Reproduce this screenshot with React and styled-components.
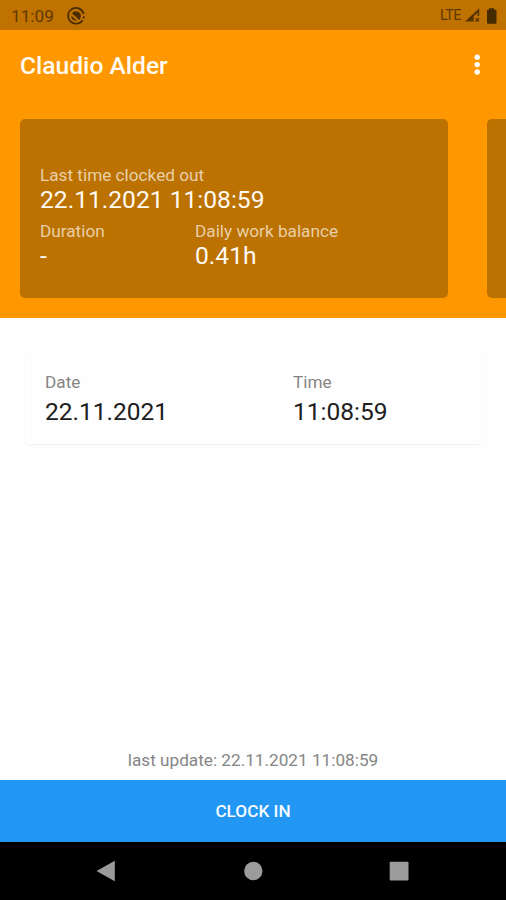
import React from "react";
import styled, { createGlobalStyle } from "styled-components";

const GlobalStyle = createGlobalStyle`
  * { box-sizing: border-box; }
  body { margin: 0; background: #fff; font-family: Roboto, "Liberation Sans", sans-serif; }
`;
const Screen = styled.div`
  width: 506px;
  height: 900px;
  display: flex;
  flex-direction: column;
  overflow: hidden;
  background: #fefefe;
`;
const StatusBar = styled.div`
  height: 30px;
  flex: none;
  display: flex;
  align-items: center;
  padding: 1px 6px 0 11px;
  background: #bf7200;
  color: #5f3900;
`;
const Clock = styled.span`
  width: 55px;
  font-size: 17.2px;
  line-height: 20px;
`;
const StatusIcons = styled.div`
  margin-left: auto;
  display: flex;
  align-items: center;
`;
const Network = styled.span`
  width: 25px;
  font-size: 14.4px;
  line-height: 20px;
  letter-spacing: -0.6px;
`;
const Header = styled.header`
  height: 288px;
  flex: none;
  background: #ff9800;
`;
const AppBar = styled.div`
  height: 89px;
  display: flex;
  justify-content: space-between;
  align-items: flex-start;
  padding: 20px 19px 0 20px;
`;
const Title = styled.h1`
  margin: 1px 0 0;
  font-size: 24.6px;
  line-height: 30px;
  font-weight: 500;
  color: #fffaf2;
`;
const MenuButton = styled.button`
  border: 0;
  padding: 0;
  margin-top: 3px;
  background: none;
  display: flex;
`;
const Carousel = styled.div`
  display: flex;
  gap: 39px;
  padding-left: 20px;
  overflow: hidden;
`;
const StatusCard = styled.section`
  flex: 0 0 428px;
  height: 179px;
  border-radius: 5px;
  padding: 45px 20px 0;
  background: #bc7200;
`;
const StatusColumns = styled.div`
  display: grid;
  grid-template-columns: 155px 1fr;
  margin-top: 6px;
`;
const StatusLabel = styled.div`
  font-size: 17.2px;
  line-height: 22px;
  color: #e8cfa8;
`;
const StatusValue = styled.div`
  font-size: 24.6px;
  line-height: 28px;
  color: #fffaf3;
`;
const Main = styled.main`
  flex: 1;
  display: flex;
  flex-direction: column;
  justify-content: space-between;
`;
const EntryCard = styled.section`
  height: 90px;
  margin: 36px 25px 0;
  padding: 17px 20px 0;
  display: grid;
  grid-template-columns: 248px 1fr;
  border-radius: 4px;
  background: #fefefe;
  box-shadow: 0 1px 2px rgba(0, 0, 0, 0.06);
`;
const FieldLabel = styled.div`
  font-size: 17.2px;
  line-height: 22px;
  color: #858585;
`;
const FieldValue = styled.div`
  margin-top: 5px;
  font-size: 24.5px;
  line-height: 28px;
  color: #202020;
`;
const LastUpdate = styled.p`
  margin: 0 0 9px;
  text-align: center;
  font-size: 17.2px;
  line-height: 22px;
  color: #858585;
`;
const ClockInButton = styled.button`
  height: 62px;
  flex: none;
  border: 0;
  padding: 0;
  background: #2196f3;
  color: #f5fbff;
  font: 500 17.2px/22px Roboto, sans-serif;
`;
const NavBar = styled.nav`
  height: 58px;
  flex: none;
  display: flex;
  justify-content: space-between;
  align-items: center;
  padding: 0 97px 0 96px;
  background: #000;
`;

const SyncIcon = () => (
  <svg width="20" height="20" viewBox="0 0 20 20" fill="none">
    <path d="M16.6 14.2A7.9 7.9 0 1 1 17.7 8M17.9 10.2A7.9 7.9 0 0 1 17.4 12.5M15.4 15.6A7.9 7.9 0 0 1 13.8 16.9" stroke="#4b2d00" strokeWidth="1.7" />
    <path d="M6 7.4A4.8 4.8 0 0 1 14.6 11.4L14 13.2 6 7.4Z M5.3 9.5 10.8 14.8A4.8 4.8 0 0 1 5.3 9.5Z" fill="#4b2d00" />
    <path d="m7.5 7.5 6.3 5.8" stroke="#4b2d00" strokeWidth="1.6" />
  </svg>
);
const SignalIcon = () => (
  <svg width="18" height="17" viewBox="0 0 18 17">
    <path d="M0 14.5 14.2 1.2V9h-1.7V5.7L8.7 9.3v5.2Z" fill="#573500" />
    <path d="m10.7 11.2 3.2 3.2m0-3.2-3.2 3.2" stroke="#573500" strokeWidth="1.4" />
  </svg>
);
const BatteryIcon = () => (
  <svg width="17" height="18" viewBox="0 0 17 18">
    <path d="M6 1.2h5v1.5h1.6q.9 0 .9 1v12.1q0 1-.9 1H4.9q-.9 0-.9-1V3.7q0-1 .9-1H6Z" fill="#452b00" />
  </svg>
);
const MoreIcon = () => (
  <svg width="20" height="24" viewBox="0 0 20 24" fill="#fff">
    <circle cx="10.2" cy="4.2" r="2.7" />
    <circle cx="10.2" cy="11.6" r="2.7" />
    <circle cx="10.2" cy="19" r="2.7" />
  </svg>
);

const Field = ({ label, children }) => (
  <div>
    <FieldLabel>{label}</FieldLabel>
    <FieldValue>{children}</FieldValue>
  </div>
);
const StatusItem = ({ label, children }) => (
  <div>
    <StatusLabel>{label}</StatusLabel>
    <StatusValue>{children}</StatusValue>
  </div>
);

export default function App() {
  return (
    <Screen>
      <GlobalStyle />
      <StatusBar>
        <Clock>11:09</Clock>
        <SyncIcon />
        <StatusIcons>
          <Network>LTE</Network>
          <SignalIcon />
          <BatteryIcon />
        </StatusIcons>
      </StatusBar>
      <Header>
        <AppBar>
          <Title>Claudio Alder</Title>
          <MenuButton aria-label="Menu"><MoreIcon /></MenuButton>
        </AppBar>
        <Carousel>
          <StatusCard>
            <StatusItem label="Last time clocked out">22.11.2021 11:08:59</StatusItem>
            <StatusColumns>
              <StatusItem label="Duration">-</StatusItem>
              <StatusItem label="Daily work balance">0.41h</StatusItem>
            </StatusColumns>
          </StatusCard>
          <StatusCard />
        </Carousel>
      </Header>
      <Main>
        <EntryCard>
          <Field label="Date">22.11.2021</Field>
          <Field label="Time">11:08:59</Field>
        </EntryCard>
        <LastUpdate>last update: 22.11.2021 11:08:59</LastUpdate>
      </Main>
      <ClockInButton>CLOCK IN</ClockInButton>
      <NavBar>
        <svg width="20" height="22" viewBox="0 0 20 22"><path d="M.5 11 18.8.8v20.4Z" fill="#9b9b9b" /></svg>
        <svg width="20" height="20" viewBox="0 0 20 20"><circle cx="10.3" cy="10" r="9.2" fill="#9b9b9b" /></svg>
        <svg width="20" height="20" viewBox="0 0 20 20"><rect x=".7" y=".7" width="18.8" height="18.8" rx="1" fill="#9b9b9b" /></svg>
      </NavBar>
    </Screen>
  );
}
